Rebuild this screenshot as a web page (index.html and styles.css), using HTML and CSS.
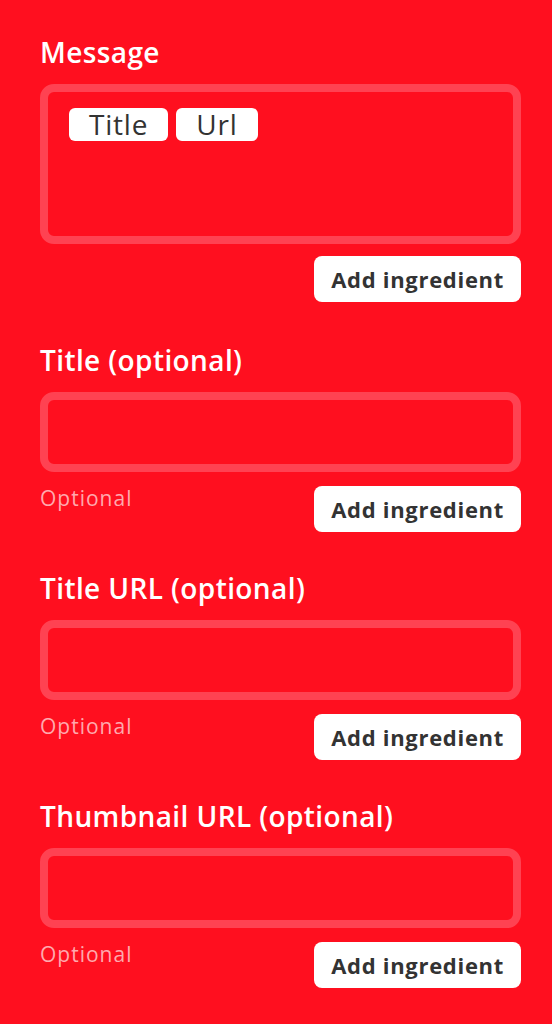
FILE: index.html
```html
<!DOCTYPE html>
<html lang="en">
<head>
    <meta charset="UTF-8">
    <meta name="viewport" content="width=device-width, initial-scale=1.0">
    <title>Action fields</title>
    <link rel="stylesheet" href="styles.css">
</head>
<body>
    <div class="container">
        <div class="field">
            <label class="field-label">Message</label>
            <div class="field-box field-box-tall">
                <span class="pill">Title</span>
                <span class="pill">Url</span>
            </div>
            <div class="field-footer">
                <span class="hint"></span>
                <button type="button" class="ingredient-btn">Add ingredient</button>
            </div>
        </div>

        <div class="field">
            <label class="field-label">Title (optional)</label>
            <div class="field-box"></div>
            <div class="field-footer has-hint">
                <span class="hint">Optional</span>
                <button type="button" class="ingredient-btn">Add ingredient</button>
            </div>
        </div>

        <div class="field">
            <label class="field-label">Title URL (optional)</label>
            <div class="field-box"></div>
            <div class="field-footer has-hint">
                <span class="hint">Optional</span>
                <button type="button" class="ingredient-btn">Add ingredient</button>
            </div>
        </div>

        <div class="field">
            <label class="field-label">Thumbnail URL (optional)</label>
            <div class="field-box"></div>
            <div class="field-footer has-hint">
                <span class="hint">Optional</span>
                <button type="button" class="ingredient-btn">Add ingredient</button>
            </div>
        </div>
    </div>
</body>
</html>
```

FILE: styles.css
```css
body {
    font-family: "Open Sans", Lato, sans-serif;
    background-color: #ff0f1f;
    margin: 0;
    padding: 0;
}
.container {
    padding: 33px 31px 0 40px;
}
.field {
    display: flex;
    flex-direction: column;
    margin-bottom: 37px;
}
.field:first-child {
    margin-bottom: 39px;
}
.field-label {
    color: #fff;
    font-size: 28px;
    font-weight: 600;
    line-height: 38px;
    margin-bottom: 13px;
    letter-spacing: 0.4px;
}
.field-box {
    box-sizing: border-box;
    height: 80px;
    border: 8px solid #ff4252;
    border-radius: 14px;
    padding: 16px 21px;
    display: flex;
    align-items: flex-start;
    gap: 8px;
}
.field-box-tall {
    height: 160px;
}
.pill {
    background: #fff;
    color: #333;
    font-size: 28px;
    font-weight: 500;
    letter-spacing: 0.8px;
    line-height: 33px;
    padding: 0 20px;
    border-radius: 6px;
}
.field-footer {
    display: flex;
    justify-content: space-between;
    align-items: flex-start;
    margin-top: 12px;
}
.field-footer.has-hint {
    margin-top: 14px;
}
.hint {
    color: #ffa9ae;
    font-size: 21px;
    letter-spacing: 1px;
    line-height: 24px;
}
.ingredient-btn {
    font-family: inherit;
    height: 46px;
    padding: 0 17px;
    background-color: #fff;
    color: #333;
    font-size: 22px;
    font-weight: 700;
    letter-spacing: 0.7px;
    border: none;
    border-radius: 8px;
    cursor: pointer;
}
```
